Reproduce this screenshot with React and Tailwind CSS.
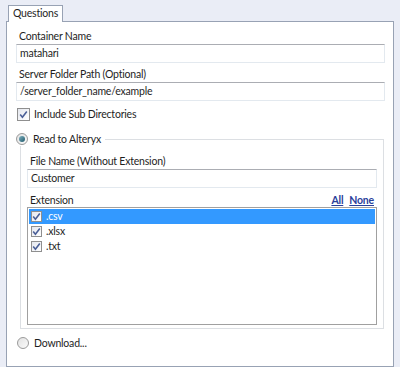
const Check = ({ checked = true, size = "h-[13px] w-[13px]" }) => (
  <span className={`inline-flex ${size} shrink-0 items-center justify-center border border-[#8f8f8f] bg-gradient-to-br from-[#e4e7ee] to-[#ffffff]`}>
    {checked && (
      <svg width="9" height="9" viewBox="0 0 9 9">
        <path d="M1.2 4.6 L3.4 7.2 L7.8 1.4" fill="none" stroke="#4a5f97" strokeWidth="1.6" />
      </svg>
    )}
  </span>
);

const Radio = ({ on }) => (
  <span className="inline-flex h-[12px] w-[12px] shrink-0 items-center justify-center rounded-full border border-[#9a9a9a] bg-gradient-to-br from-[#e2e2e2] to-[#fbfbfb]">
    {on && <span className="h-[6px] w-[6px] rounded-full bg-gradient-to-br from-[#7fb1c0] to-[#1d5a6c]" />}
  </span>
);

const TextBox = ({ value }) => (
  <div className="flex h-[19px] items-center border border-[#e3e9ef] border-t-[#abadb3] bg-white px-[3px] text-[#1e1e1e]">
    {value}
  </div>
);

export default function App() {
  const exts = [".csv", ".xlsx", ".txt"];
  return (
    <div
      className="flex h-[367px] w-[400px] flex-col overflow-hidden bg-[#eaedf6] pl-[6px] pr-[6px] pt-[5px] text-[10.5px] tracking-[-0.2px] text-[#1e1e1e]"
      style={{ fontFamily: 'Lato, "Noto Sans", sans-serif' }}
    >
      <div className="relative z-10 -mb-px ml-[2px] flex h-[17px] w-[55px] items-center justify-center border border-b-0 border-[#98a2b4] bg-white">
        Questions
      </div>
      <div className="flex flex-1 flex-col border border-[#98a2b4] bg-white pl-[9px] pr-[8px] pt-[7px]">
        <div className="mb-[1px] pl-[3px] leading-[14px]">Container Name</div>
        <TextBox value="matahari" />
        <div className="mb-[1px] mt-[4px] pl-[3px] leading-[14px]">Server Folder Path (Optional)</div>
        <TextBox value="/server_folder_name/example" />
        <div className="mt-[6px] flex items-center gap-[4px] pl-[1px] leading-[14px]">
          <Check />
          <span>Include Sub Directories</span>
        </div>
        <div className="relative mt-[18px] ml-[4px] mr-[1px] h-[190px] border border-[#dcdfe3] px-[6px] pt-[14px]">
          <div className="absolute -left-[5px] -top-[8px] flex items-center gap-[5px] bg-white pr-[4px] leading-[14px]">
            <Radio on />
            <span>Read to Alteryx</span>
          </div>
          <div className="mb-[1px] pl-[3px] leading-[14px]">File Name (Without Extension)</div>
          <TextBox value="Customer" />
          <div className="mt-[5px] flex items-end justify-between pl-[3px] pr-[3px] leading-[14px]">
            <span>Extension</span>
            <span className="flex gap-[6px] font-bold text-[#2a3f9a]">
              <span className="underline">All</span>
              <span className="underline">None</span>
            </span>
          </div>
          <div className="h-[118px] border border-[#a0a0a0] bg-white p-[1px]">
            {exts.map((e, i) => (
              <div
                key={e}
                className={`flex h-[15px] items-center gap-[4px] pl-[2px] ${i === 0 ? "bg-[#3399ff] text-white" : ""}`}
              >
                <Check size="h-[11px] w-[11px]" />
                <span>{e}</span>
              </div>
            ))}
          </div>
        </div>
        <div className="mt-[7px] flex items-center gap-[5px] pl-[1px] leading-[14px]">
          <Radio />
          <span>Download...</span>
        </div>
      </div>
    </div>
  );
}
